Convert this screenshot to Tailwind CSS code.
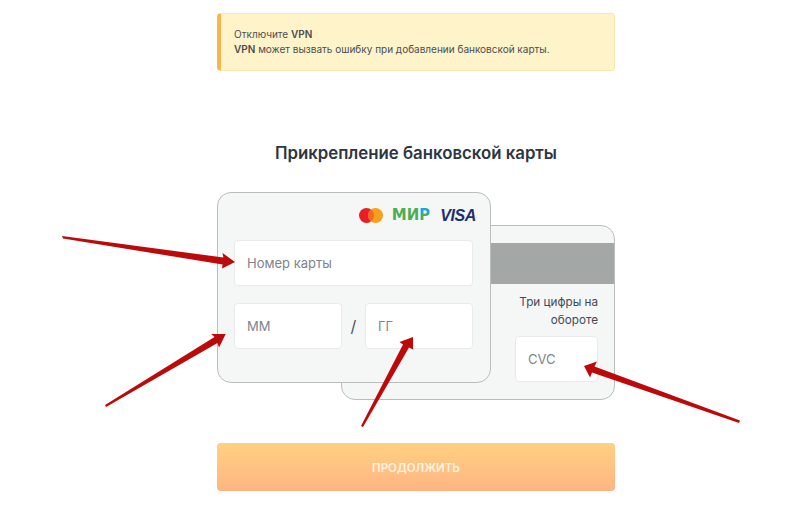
<!DOCTYPE html>
<html lang="en">
<head>
  <meta charset="UTF-8">
  <meta name="viewport" content="width=device-width, initial-scale=1.0">
  <title>Прикрепление банковской карты</title>
  <script src="https://cdn.jsdelivr.net/npm/@tailwindcss/browser@4"></script>
</head>
<body class="bg-white font-['Inter','Noto_Sans',sans-serif] overflow-hidden">
  <div class="relative h-[515px] w-[800px]">
    <div class="ml-[217px] w-[398px] pt-[13px]">

      <!-- alert -->
      <div class="flex h-[58px] flex-col justify-center rounded border border-[#f6e6b4] border-l-4 border-l-[#fbb44c] bg-[#fff3c9] pl-[13px] text-[10px] leading-[15px] text-[#4a4d52]">
        <p>Отключите <b class="font-semibold">VPN</b></p>
        <p><b class="font-semibold">VPN</b> может вызвать ошибку при добавлении банковской карты.</p>
      </div>

      <h1 class="mt-[71px] text-center text-[16.8px] leading-[22px] font-semibold text-[#2d3642]">Прикрепление банковской карты</h1>

      <!-- cards -->
      <div class="relative mt-[28px] h-[208px]">
        <!-- back of the card -->
        <div class="absolute top-[33px] left-[124px] flex h-[175px] w-[274px] flex-col rounded-[14px] border border-[#b9bdbd] bg-[#f5f6f6]">
          <div class="mt-[17px] h-[41px] shrink-0 bg-[#a3a8a7]"></div>
          <div class="mt-[9px] pr-[16px] text-right text-[11.7px] leading-[18px] text-[#3d4a5a]">Три цифры на<br>обороте</div>
          <div class="mt-[7px] mr-[16px] flex h-[46px] w-[83px] items-center self-end rounded border border-[#e9ebeb] bg-white pt-[2px] pl-[12px] text-[13px] text-[#7d838c]">CVC</div>
        </div>
        <!-- front of the card -->
        <div class="absolute top-0 left-0 h-[191px] w-[274px] rounded-[14px] border border-[#b9bdbd] bg-[#f5f6f6] pr-[17px] pl-[16px]">
          <div class="-mr-[3px] flex h-[47px] items-center justify-end pb-[2px]">
            <svg width="24" height="15" viewBox="0 0 24 15">
              <circle cx="7.5" cy="7.5" r="7.5" fill="#eb1c26"></circle>
              <circle cx="16.5" cy="7.5" r="7.5" fill="#f99f1b"></circle>
              <path d="M12 1.5a7.5 7.5 0 0 1 0 12a7.5 7.5 0 0 1 0-12z" fill="#f26a21"></path>
            </svg>
            <span class="ml-[9px] font-['DejaVu_Sans',sans-serif] text-[15px] leading-none font-bold text-[#4cad53]">МИ<span class="bg-gradient-to-b from-[#1ba5d8] from-45% to-[#4cad53] to-45% bg-clip-text text-transparent">Р</span></span>
            <span class="ml-[10px] font-['Liberation_Sans',sans-serif] text-[16px] leading-none font-bold tracking-[-0.4px] text-[#1d2f6f] italic">VISA</span>
          </div>
          <div class="flex h-[46px] items-center rounded border border-[#e9ebeb] bg-white pt-[2px] pl-[12px] text-[13px] text-[#7d838c]">Номер карты</div>
          <div class="mt-[17px] flex items-center justify-between">
            <div class="flex h-[46px] w-[108px] items-center rounded border border-[#e9ebeb] bg-white pt-[2px] pl-[12px] text-[13px] text-[#7d838c]">ММ</div>
            <span class="text-base text-[#4a5563]">/</span>
            <div class="flex h-[46px] w-[108px] items-center rounded border border-[#e9ebeb] bg-white pt-[2px] pl-[12px] text-[13px] text-[#7d838c]">ГГ</div>
          </div>
        </div>
      </div>

      <button class="mt-[43px] h-[48px] w-full rounded bg-gradient-to-b from-[#ffd182] to-[#ffb482] pt-[3px] text-[11.5px] font-semibold text-white/80" type="button">ПРОДОЛЖИТЬ</button>
    </div>

    <!-- red arrows drawn over the screenshot -->
    <svg class="absolute top-0 left-0" width="800" height="515" viewBox="0 0 800 515" fill="#bc0a0a">
      <polygon points="62,236 63,238.5 222.6,264.5 222,268.5 235,262 222.5,253 223.4,257.5"></polygon>
      <polygon points="105,405 106,407 217.5,343 219,347.5 225.7,334 211.2,334 214.5,337"></polygon>
      <polygon points="361,426 363,427 409,347.5 413,349.5 413,337 399.5,342 403,344.5"></polygon>
      <polygon points="739,423 740,420.5 594.5,366.5 597,361.5 584,366 590,377.5 592,372.5"></polygon>
    </svg>
  </div>
</body>
</html>
